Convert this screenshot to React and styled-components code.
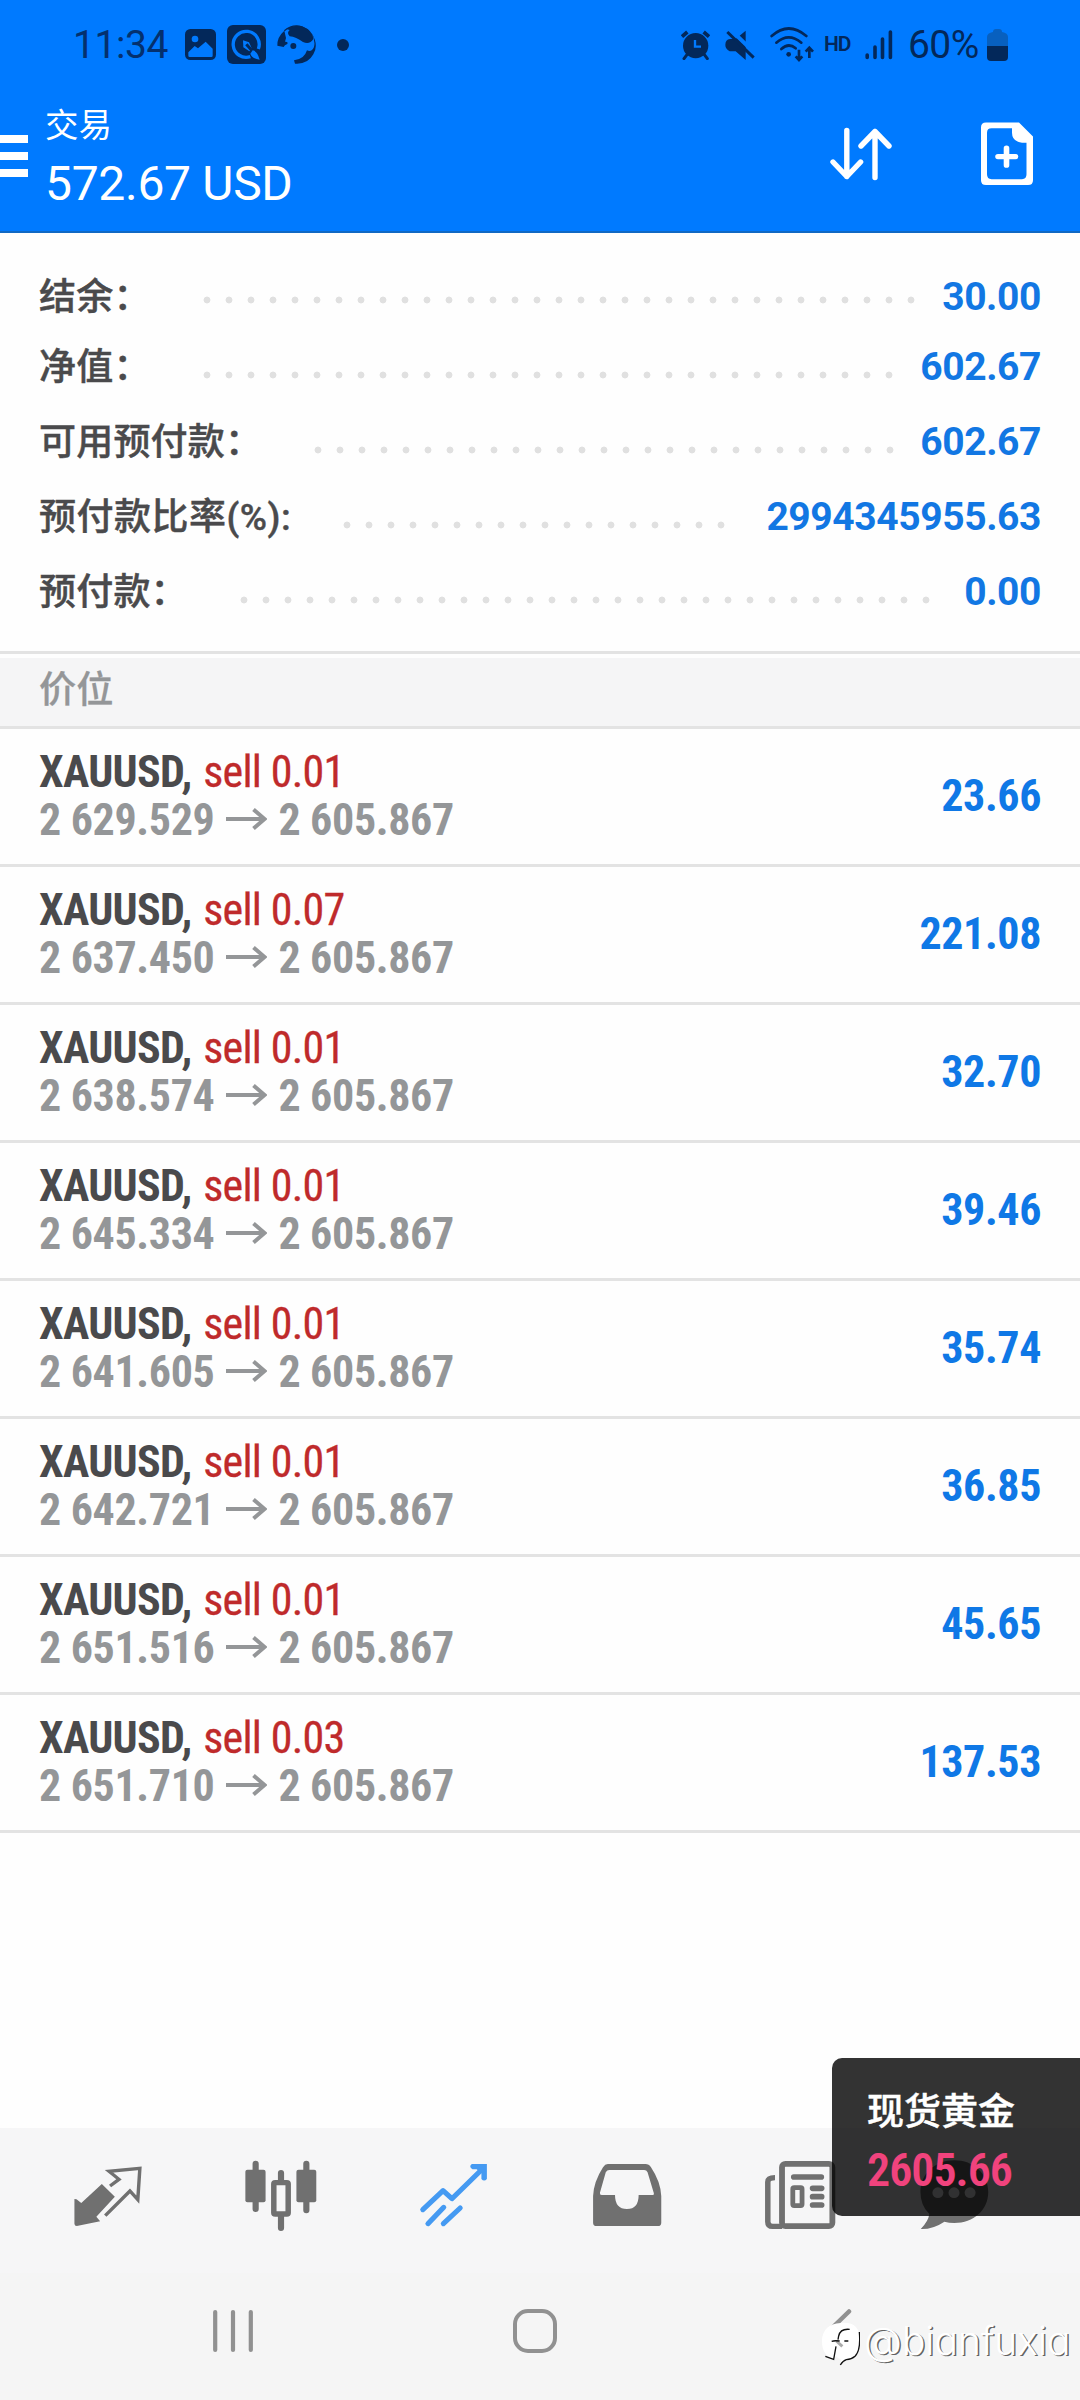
import styled, { createGlobalStyle } from "styled-components";

const summary = [
  { label: "结余：", value: "30.00", dots: 33, lift: 5 },
  { label: "净值：", value: "602.67", dots: 32, lift: 15 },
  { label: "可用预付款：", value: "602.67", dots: 27, lift: 15 },
  { label: "预付款比率(%):", value: "2994345955.63", dots: 18, lift: 15, tracking: 0.5 },
  { label: "预付款：", value: "0.00", dots: 32, lift: 15 },
];

const positions = [
  { volume: "0.01", open: "2 629.529", profit: "23.66" },
  { volume: "0.07", open: "2 637.450", profit: "221.08" },
  { volume: "0.01", open: "2 638.574", profit: "32.70" },
  { volume: "0.01", open: "2 645.334", profit: "39.46" },
  { volume: "0.01", open: "2 641.605", profit: "35.74" },
  { volume: "0.01", open: "2 642.721", profit: "36.85" },
  { volume: "0.01", open: "2 651.516", profit: "45.65" },
  { volume: "0.03", open: "2 651.710", profit: "137.53" },
];

const PictureIcon = () => (
  <svg width="31" height="31" viewBox="0 0 93 93">
    <rect width="93" height="93" rx="16" fill="currentColor" />
    <circle cx="30" cy="30" r="10" fill="#007aff" />
    <path d="M10 70L29 51L39 58L62 38L83 59V80Q83 84 79 84H14Q10 84 10 80Z" fill="#007aff" />
  </svg>
);

const QuickIcon = () => (
  <svg width="39" height="39" viewBox="0 0 117 117">
    <rect width="117" height="117" rx="18" fill="currentColor" />
    <path d="M94 72A39 39 0 1 0 70 95" fill="none" stroke="#007aff" strokeWidth="10" />
    <path d="M48 46L66 52L75 72L67 79L49 67Z" fill="#007aff" />
    <path d="M58 58L78 80" stroke="currentColor" strokeWidth="9" />
    <path d="M77 76Q91 78 98 104Q74 100 70 86Z" fill="#007aff" />
  </svg>
);

const FaceIcon = () => (
  <svg width="39" height="39" viewBox="0 0 117 117">
    <path d="M1 62Q0 36 22 17L27 39L24 50Q34 49 31 57Q22 60 20 66Z" fill="currentColor" />
    <path d="M22 17Q58 -12 95 18" fill="none" stroke="currentColor" strokeWidth="4" />
    <path d="M28 12Q60 -8 92 12Q108 25 109 42Q98 60 78 51Q57 36 38 34Q28 24 38 15Z" fill="currentColor" />
    <path d="M104 25Q126 60 109 88Q92 119 54 116L51 106Q82 103 90 76Q104 82 111 66Q116 48 104 25Z" fill="currentColor" />
    <circle cx="49" cy="63" r="9" fill="currentColor" />
  </svg>
);

const AlarmIcon = () => (
  <svg width="29" height="30" viewBox="0 0 87 90">
    <circle cx="44" cy="47" r="38" fill="currentColor" />
    <path d="M3 20L19 6M84 20L68 6" stroke="currentColor" strokeWidth="11" />
    <path d="M18 74L9 86M70 74L79 86" stroke="currentColor" strokeWidth="9" strokeLinecap="round" />
    <path d="M42 30V50H60" fill="none" stroke="#007aff" strokeWidth="7" />
  </svg>
);

const MuteIcon = () => (
  <svg width="30" height="31" viewBox="0 0 90 93">
    <path d="M62 5V93L32 67H14Q1 60 1 48Q1 31 15 30H32Z" fill="currentColor" />
    <path d="M12 -3L94 77" stroke="#007aff" strokeWidth="12" />
    <path d="M7 9L86 86" stroke="currentColor" strokeWidth="9" />
  </svg>
);

const WifiIcon = () => (
  <svg width="45" height="35" viewBox="0 0 135 105">
    <g fill="none" stroke="currentColor" strokeWidth="8" strokeLinecap="round">
      <path d="M5 27Q56 -18 109 27" />
      <path d="M19 47Q56 15 94 47" />
      <path d="M34 66Q56 46 77 64" />
    </g>
    <circle cx="56" cy="82" r="7" fill="currentColor" />
    <path d="M87 68V98M77 88L87 99L97 88M118 93V62M107 74L118 62L129 74" fill="none" stroke="currentColor" strokeWidth="8" />
  </svg>
);

const SignalIcon = () => (
  <svg width="28" height="30" viewBox="0 0 28 30">
    <path d="M2.2 25V27.500M10 17V27.500M17.5 9V27.500M25.4 2V27.500" stroke="currentColor" strokeWidth="3.6" strokeLinecap="round" />
  </svg>
);

const BatteryIcon = () => (
  <svg width="21" height="32" viewBox="0 0 21 32">
    <path d="M6 3Q6 0 9 0H12Q15 0 15 3Q21 4 21 8V17H0V8Q0 4 6 3Z" fill="#0860bf" />
    <path d="M0 17H21V28Q21 32 17 32H4Q0 32 0 28Z" fill="currentColor" />
  </svg>
);

const SortIcon = () => (
  <svg width="64" height="54" viewBox="0 0 64 54">
    <path
      d="M17.8 3.500V49.500M4 35L17.8 49.500L31.6 35M46 50.500V4.500M32 19L46 4.500L60 19"
      fill="none"
      stroke="#fff"
      strokeWidth="5.4"
      strokeLinecap="round"
      strokeLinejoin="round"
    />
  </svg>
);

const NewOrderIcon = () => (
  <svg width="52" height="63" viewBox="0 0 52 65" preserveAspectRatio="none">
    <path
      fill="#fff"
      fillRule="evenodd"
      d="M5 .5H38L52 15V60Q52 65 47 65H5Q0 65 0 60V5.500Q0 .5 5 .5ZM10.500 6.500Q6 6.500 6 11V54Q6 59 10.500 59H41Q45.500 59 45.500 54V21.500H41Q31 20 31 11V6.500Z"
    />
    <path d="M25.500 27V44.500M17 35.700H34.500" stroke="#fff" strokeWidth="5.600" strokeLinecap="round" />
  </svg>
);

const ArrowIcon = () => (
  <ArrowSvg width="41" height="22" viewBox="0 0 41 22">
    <path d="M0 11H38M27.500 1.500L38.500 11L27.500 20.500" fill="none" stroke="#949698" strokeWidth="4" />
  </ArrowSvg>
);

const QuotesIcon = () => (
  <TabSvg viewBox="207 150 216 216">
    <path d="M297 222L335 260L281 320L292 334L224 348Q217 348 217 341V267L223 268L237 279Z" fill="currentColor" />
    <path
      d="M321 228L347 208L318 184L408 175L402 269L379 243L307 317"
      fill="none"
      stroke="currentColor"
      strokeWidth="10"
    />
  </TabSvg>
);

const ChartIcon = () => (
  <TabSvg viewBox="708 150 216 216">
    <path d="M742 161V297M890 161V301M816 189V215M816 318V354" stroke="currentColor" strokeWidth="18" strokeLinecap="round" />
    <rect x="712" y="179" width="59" height="98" rx="6" fill="currentColor" />
    <rect x="861" y="179" width="58" height="98" rx="6" fill="currentColor" />
    <rect x="795" y="218" width="42" height="94" rx="4" fill="#f6f6f7" stroke="currentColor" strokeWidth="16" />
  </TabSvg>
);

const TradeIcon = () => (
  <TabSvg viewBox="1212 150 216 216">
    <g fill="none" stroke="currentColor" strokeLinecap="round" strokeWidth="15">
      <path d="M1229 299L1288 242L1314 266L1402 178" strokeLinejoin="round" />
      <path d="M1244 341L1290 292M1289 341L1338 294" />
    </g>
    <path d="M1372 162H1416V207Q1408 216 1400 207V190L1386 178H1374Q1362 170 1372 162Z" fill="currentColor" />
  </TabSvg>
);

const HistoryIcon = () => (
  <TabSvg viewBox="146 360 216 216">
    <path
      fill="currentColor"
      fillRule="evenodd"
      d="M198 372H308Q318 372 324 382Q352 425 354 468V548Q354 558 344 558H165Q155 558 155 548V468Q157 425 184 382Q190 372 198 372ZM202 390Q196 390 192 397L175 458Q174 465 180 465H219Q219 507 254 507Q288 507 288 465H328Q334 465 332 458L314 397Q311 390 304 390Z"
    />
  </TabSvg>
);

const NewsIcon = () => (
  <TabSvg viewBox="649 360 216 216">
    <path d="M684 413Q663 413 663 426V545Q663 559 677 559H705" fill="none" stroke="currentColor" strokeWidth="16" />
    <rect x="704.500" y="371.500" width="147" height="187" rx="10" fill="none" stroke="currentColor" strokeWidth="17" />
    <path d="M739 411H819M794 445H820M794 470H820M794 495H820" stroke="currentColor" strokeWidth="17" strokeLinecap="round" />
    <rect x="736" y="443" width="27" height="54" rx="4" fill="none" stroke="currentColor" strokeWidth="14" />
  </TabSvg>
);

const ChatIcon = () => (
  <TabSvg viewBox="1097 360 216 216">
    <path
      d="M1206 361C1262 361 1305 401 1305 456C1305 511 1262 549 1206 549Q1190 549 1177 545Q1144 568 1108 567Q1130 544 1133 522Q1107 497 1107 456C1107 401 1150 361 1206 361Z"
      fill="currentColor"
    />
    <g fill="#f6f6f7">
      <circle cx="1158" cy="458" r="16" />
      <circle cx="1205" cy="458" r="16" />
      <circle cx="1252" cy="458" r="16" />
    </g>
  </TabSvg>
);

const MarkIcon = () => (
  <svg width="39" height="45" viewBox="34 62 117 135">
    <path d="M93 68Q152 62 151 122Q150 174 112 179Q104 181 94 194L93 177Q84 173 78 166L74 179Q36 166 37 120Q39 72 93 68Z" fill="#fff" />
    <path d="M149 95Q154 150 136 168Q126 177 110 178Q100 181 92 194" fill="none" stroke="#111" strokeWidth="4" />
    <path d="M80 122L98 138" stroke="#aaa" strokeWidth="9" />
    <path d="M120 87Q92 84 87 107L85 118M66 123Q74 120 90 122M104 122H116M79 138L72 177L47 168" fill="none" stroke="#111" strokeWidth="4" />
  </svg>
);

const tabs = [QuotesIcon, ChartIcon, TradeIcon, HistoryIcon, NewsIcon, ChatIcon];

const App = () => (
  <Screen>
    <GlobalStyle />
    <StatusBar>
      <Notifications>
        <Clock>11:34</Clock>
        <PictureIcon />
        <QuickIcon />
        <FaceIcon />
        <MoreDot />
      </Notifications>
      <Indicators>
        <AlarmIcon />
        <MuteIcon />
        <WifiIcon />
        <Hd>HD</Hd>
        <SignalIcon />
        <Battery>
          60%
          <BatteryIcon />
        </Battery>
      </Indicators>
    </StatusBar>

    <Header>
      <MenuButton aria-label="menu">
        <MenuBar />
        <MenuBar />
        <MenuBar />
      </MenuButton>
      <Titles>
        <Title>交易</Title>
        <Total>572.67 USD</Total>
      </Titles>
      <Actions>
        <SortIcon />
        <NewOrderIcon />
      </Actions>
    </Header>

    <Summary>
      {summary.map((row) => (
        <SummaryRow key={row.label}>
          <Label $lift={row.lift} $tracking={row.tracking}>
            {row.label}
          </Label>
          <Dots $count={row.dots} />
          <Value $lift={row.lift}>{row.value}</Value>
        </SummaryRow>
      ))}
    </Summary>

    <SectionTitle>价位</SectionTitle>
    <Positions>
      {positions.map((item) => (
        <Position key={item.open}>
          <div>
            <Line>
              <Symbol>XAUUSD,</Symbol>
              <Side>sell {item.volume}</Side>
            </Line>
            <Line>
              <Price>{item.open}</Price>
              <ArrowIcon />
              <Price>2 605.867</Price>
            </Line>
          </div>
          <Profit>{item.profit}</Profit>
        </Position>
      ))}
    </Positions>

    <TabBar>
      {tabs.map((Icon, i) => (
        <Tab key={i} $active={i === 2} $last={i === tabs.length - 1}>
          <Icon />
        </Tab>
      ))}
    </TabBar>

    <SystemNav>
      <svg width="40" height="44" viewBox="0 0 40 44">
        <path d="M2.200 3V41M20 3V41M37.800 3V41" stroke="#919191" strokeWidth="4.200" strokeLinecap="round" />
      </svg>
      <svg width="44" height="44" viewBox="0 0 44 44">
        <rect x="2" y="2" width="40" height="40" rx="13" fill="none" stroke="#919191" strokeWidth="4" />
      </svg>
      <BackSvg width="26" height="44" viewBox="0 0 26 44">
        <path d="M23 2.500L3 22L14 33" fill="none" stroke="#919191" strokeWidth="4.500" strokeLinecap="round" />
      </BackSvg>
    </SystemNav>

    <Ticker>
      <TickerName>现货黄金</TickerName>
      <TickerPrice>2605.66</TickerPrice>
    </Ticker>
    <Watermark>
      <MarkIcon />
      <span>@bianfuxia</span>
    </Watermark>
  </Screen>
);

export default App;

const GlobalStyle = createGlobalStyle`
  * {
    box-sizing: border-box;
  }

  body {
    margin: 0;
    background: #fefefe;
    font-family: Roboto, "Noto Sans CJK SC", sans-serif;
  }

  svg {
    display: block;
    flex-shrink: 0;
  }
`;

const Screen = styled.div`
  position: relative;
  display: flex;
  flex-direction: column;
  width: 1080px;
  height: 2400px;
  overflow: hidden;
  background: #fefefe;
  white-space: nowrap;
`;

const StatusBar = styled.div`
  display: flex;
  justify-content: space-between;
  height: 89px;
  padding: 0 72px 0 73px;
  background: #007aff;
  color: #03285a;
`;

const Notifications = styled.div`
  display: flex;
  align-items: center;
  gap: 11px;
`;

const Clock = styled.span`
  width: 101px;
  font-size: 39px;
  letter-spacing: -0.4px;
  color: #04306e;
`;

const MoreDot = styled.i`
  width: 12px;
  height: 12px;
  margin-left: 10px;
  border-radius: 50%;
  background: currentColor;
`;

const Indicators = styled.div`
  display: flex;
  align-items: center;
  gap: 15px;
`;

const Hd = styled.span`
  width: 26px;
  margin-left: -6px;
  padding-bottom: 1px;
  font-size: 21px;
  font-weight: 600;
  letter-spacing: -1px;
`;

const Battery = styled.span`
  display: flex;
  align-items: center;
  justify-content: space-between;
  width: 100px;
  font-size: 39px;
  letter-spacing: -0.6px;
`;

const Header = styled.header`
  display: flex;
  height: 144px;
  background: #007aff;
  border-bottom: 2px solid #1169c4;
  color: #fff;
`;

const MenuButton = styled.button`
  display: flex;
  flex-direction: column;
  gap: 9px;
  width: 28px;
  height: 42px;
  margin: 46px 17px 0 0;
  padding: 0;
  border: none;
  background: none;
`;

const MenuBar = styled.i`
  width: 100%;
  height: 8px;
  background: #fff;
`;

const Titles = styled.div`
  display: flex;
  flex-direction: column;
`;

const Title = styled.h1`
  margin: 13px 0 0;
  font-size: 33.500px;
  font-weight: 400;
  line-height: 48px;
`;

const Total = styled.div`
  font-size: 48px;
  line-height: 67px;
  letter-spacing: -0.3px;
`;

const Actions = styled.div`
  display: flex;
  gap: 88px;
  margin: 33px 47px 0 auto;

  & svg:first-child {
    margin-top: 5px;
  }
`;

const Summary = styled.section`
  height: 418px;
  padding: 29px 39px 0 39px;
`;

const SummaryRow = styled.div`
  display: flex;
  align-items: center;
  height: 75px;
`;

const Label = styled.span`
  margin-right: 52px;
  padding-bottom: ${({ $lift }) => $lift - 1}px;
  font-size: 37px;
  font-weight: 500;
  line-height: 50px;
  letter-spacing: ${({ $tracking }) => $tracking || 0.2}px;
  color: #4a4a4c;
  -webkit-text-stroke: 0.4px #4a4a4c;
`;

const Dots = styled.i`
  width: ${({ $count }) => $count * 22}px;
  height: 8px;
  background: radial-gradient(circle at 4px 4px, #e0e0e0 3px, transparent 3.800px) 0 0 / 22px 8px repeat-x;
`;

const Value = styled.span`
  margin-left: auto;
  padding-bottom: ${({ $lift }) => $lift}px;
  font-size: 39px;
  font-weight: 700;
  line-height: 50px;
  letter-spacing: -0.4px;
  color: #1277e3;
`;

const SectionTitle = styled.h2`
  height: 78px;
  margin: 0;
  padding: 0 39px;
  border-top: 3px solid #e3e3e3;
  border-bottom: 3px solid #e3e3e3;
  background: linear-gradient(#fefefe 4px, #f5f5f6 4px);
  font-size: 37.200px;
  font-weight: 500;
  line-height: 72px;
  color: #949698;
  -webkit-text-stroke: 0.3px #949698;
`;

const Positions = styled.div`
  flex: 1;
`;

const Position = styled.div`
  display: flex;
  align-items: center;
  justify-content: space-between;
  height: 138px;
  padding: 0 39px 1px 39px;
  border-bottom: 3px solid #e3e3e3;
  font-family: "Roboto Condensed", Roboto, sans-serif;
  font-size: 44px;
  font-weight: 700;
  line-height: 48px;
  letter-spacing: -0.4px;
`;

const Line = styled.div`
  display: flex;
  align-items: center;
  gap: 11.500px;
`;

const Symbol = styled.span`
  letter-spacing: -0.7px;
  color: #4a4a4c;
`;

const Side = styled.span`
  font-weight: 400;
  letter-spacing: -0.7px;
  color: #bf2a2b;
  -webkit-text-stroke: 0.3px #bf2a2b;
`;

const Price = styled.span`
  letter-spacing: -0.35px;
  color: #949698;
`;

const ArrowSvg = styled.svg`
  margin-bottom: 2px;
`;

const Profit = styled.span`
  color: #0f78e6;
`;

const TabBar = styled.nav`
  display: flex;
  height: 145px;
  padding: 0 1px 9px 21px;
  background: #f6f6f7;
`;

const Tab = styled.div`
  display: flex;
  align-items: center;
  justify-content: center;
  width: ${({ $last }) => ($last ? 136 : 173)}px;
  color: ${({ $active }) => ($active ? "#459af2" : "#707070")};
`;

const TabSvg = styled.svg.attrs({ preserveAspectRatio: "none" })`
  width: 74px;
  height: 72px;
`;

const SystemNav = styled.nav`
  display: flex;
  height: 127px;
  padding: 36px 0 0 213px;
  gap: 260px;
  background: #f5f5f5;
`;

const BackSvg = styled.svg`
  margin-left: 9px;
`;

const Ticker = styled.aside`
  position: absolute;
  right: 0;
  top: 2058px;
  width: 248px;
  height: 158px;
  padding: 28px 0 0 35px;
  border-radius: 10px 0 0 10px;
  background: rgba(0, 0, 0, 0.8);
`;

const TickerName = styled.div`
  font-size: 37px;
  font-weight: 500;
  line-height: 54px;
  color: #fff;
  -webkit-text-stroke: 0.4px #fff;
`;

const TickerPrice = styled.div`
  font-family: "Roboto Condensed", Roboto, sans-serif;
  font-size: 46px;
  font-weight: 600;
  line-height: 60px;
  letter-spacing: -1px;
  color: #f0437d;
`;

const Watermark = styled.div`
  position: absolute;
  left: 821px;
  top: 2321px;
  display: flex;
  gap: 4px;
  font-family: Inter, sans-serif;
  font-size: 39px;
  font-weight: 300;
  font-feature-settings: "cv11";
  line-height: 39px;
  color: #fff;
  text-shadow: 1.5px 1px 0.5px rgba(0, 0, 0, 0.6);
`;
